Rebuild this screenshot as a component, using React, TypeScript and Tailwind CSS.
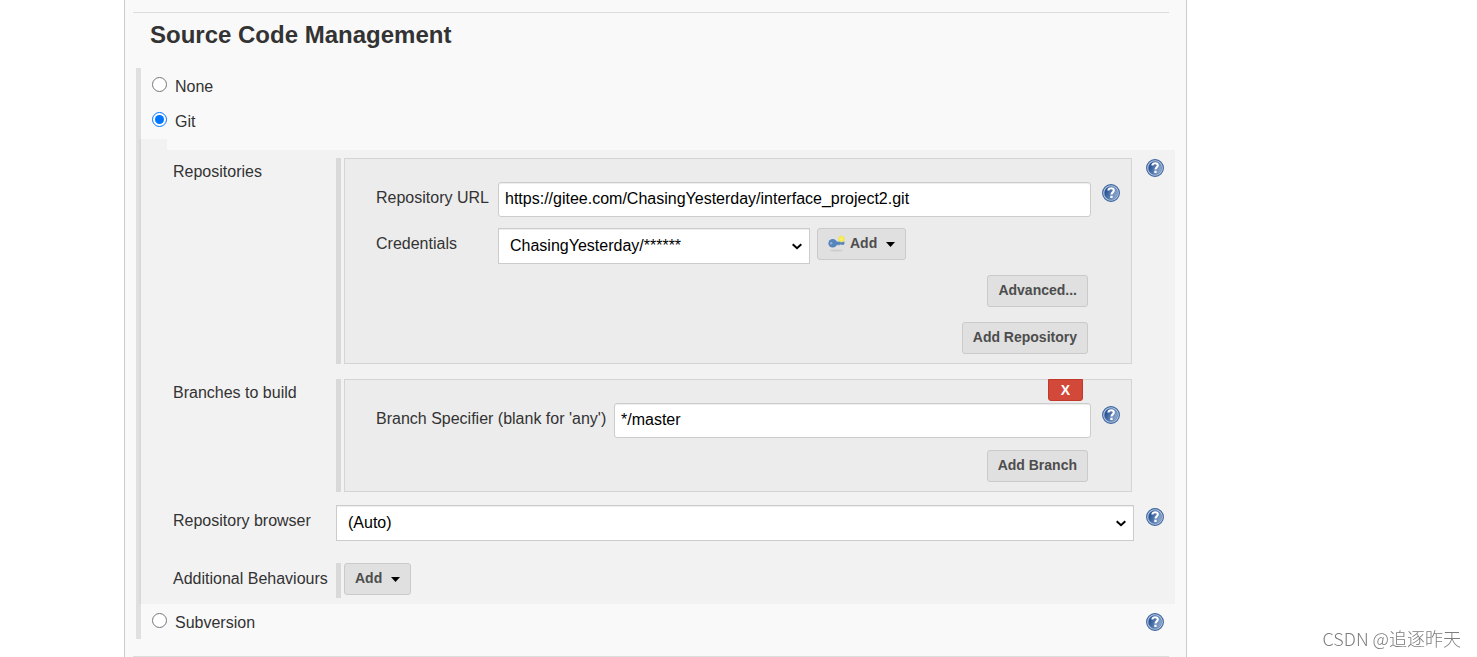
import { useState, type ReactNode } from 'react'

function HelpLink({ topic, className = '' }: { topic: string; className?: string }) {
  return (
    <a href="#help" aria-label={`Help for feature: ${topic}`} className={`block shrink-0 ${className}`}>
      <svg width="18" height="18" viewBox="0 0 18 18">
        <defs>
          <linearGradient id="help-fill" x1="0" y1="0.3" x2="1" y2="0.7">
            <stop offset="0.1" stopColor="#275293" />
            <stop offset="1" stopColor="#94afd3" />
          </linearGradient>
        </defs>
        <circle cx="9" cy="9" r="8.4" fill="#b9cae0" stroke="#3c64a0" strokeWidth="1.1" />
        <circle cx="9" cy="9" r="6.6" fill="url(#help-fill)" stroke="#5578aa" strokeWidth="0.5" />
        <path
          d="M6.400 6.500C6.400 5 7.600 4.300 9.100 4.300c1.600 0 2.700.9 2.700 2.200 0 1.900-2.300 1.800-2.300 4"
          fill="none"
          stroke="#fff"
          strokeWidth="2.100"
        />
        <rect x="8.300" y="11.700" width="2.300" height="2.300" fill="#fff" />
      </svg>
    </a>
  )
}

function Caret() {
  return (
    <svg width="9" height="5" viewBox="0 0 9 5" className="mt-[3px] ml-[9px]">
      <path d="M0 0h9L4.500 5z" fill="#000" />
    </svg>
  )
}

function KeyIcon() {
  return (
    <svg width="17" height="17" viewBox="0 0 17 17" className="mt-[2px] mr-[5px]">
      <defs>
        <radialGradient id="key-glow">
          <stop offset="0.2" stopColor="#f9f06a" />
          <stop offset="0.6" stopColor="#f1e64f" />
          <stop offset="1" stopColor="#f1e64f" stopOpacity="0" />
        </radialGradient>
      </defs>
      <ellipse cx="8.500" cy="15.500" rx="6.500" ry="1" fill="#b9b9b9" opacity="0.5" />
      <path d="M7 6.500h9.500v2.500l-1 1h-2l-1-.500-1 .800H7z" fill="#6b94c6" />
      <path d="M7 8h9" stroke="#41699f" strokeWidth="0.8" />
      <circle cx="4.700" cy="8.300" r="4.300" fill="#5583bb" />
      <circle cx="3.200" cy="8.200" r="1.200" fill="#8db0da" />
      <circle cx="13.500" cy="4" r="4" fill="url(#key-glow)" />
    </svg>
  )
}

function Button({ children }: { children: ReactNode }) {
  return (
    <button
      type="button"
      className="flex h-8 items-center rounded-[3px] border border-[#cacaca] bg-[#e0e0e0] px-[10px] pb-[3px] text-sm font-bold text-[#4d4d4d]"
    >
      {children}
    </button>
  )
}

function Select({ id, options }: { id: string; options: string[] }) {
  return (
    <div className="relative w-full">
      <select
        id={id}
        className="block h-9 w-full appearance-none border border-[#ccc] bg-white pr-8 pl-[11px] text-black shadow-[inset_0_1px_1px_rgba(0,0,0,0.075)]"
      >
        {options.map((option) => (
          <option key={option}>{option}</option>
        ))}
      </select>
      <svg
        width="10"
        height="7"
        viewBox="0 0 10 7"
        className="pointer-events-none absolute top-[15px] right-[8px]"
      >
        <path d="M.700 1.200L5 5.200l4.300-4" fill="none" stroke="#000" strokeWidth="2" />
      </svg>
    </div>
  )
}

function TextInput({ id, value }: { id: string; value: string }) {
  return (
    <input
      id={id}
      type="text"
      defaultValue={value}
      className="h-[35px] min-w-0 flex-1 rounded-[3px] border border-[#ccc] bg-white px-[6px] pb-px text-black shadow-[inset_0_1px_1px_rgba(0,0,0,0.075)]"
    />
  )
}

function ScmOption({
  name,
  selected,
  onSelect,
  help,
}: {
  name: string
  selected: string
  onSelect: (name: string) => void
  help?: boolean
}) {
  return (
    <div className="flex h-[35px] items-start justify-between pr-[11px] pl-[11px]">
      <label className="flex items-baseline gap-2 pt-[7px]">
        <input
          type="radio"
          name="scm"
          checked={selected === name}
          onChange={() => onSelect(name)}
          className="h-[15px] w-[15px]"
        />
        {name}
      </label>
      {help && <HelpLink topic={name} className="mt-[9px]" />}
    </div>
  )
}

const rowLabel = 'w-[163px] shrink-0'
const group = 'flex-1 border-l-[5px] border-[#d9d9d9] pl-[3px]'
const box = 'border border-[#d4d4d4] bg-[#ececec] pb-[9px] pl-[31px]'

export default function App() {
  const [scm, setScm] = useState('Git')

  return (
    <div className="min-h-screen bg-white font-['Liberation_Sans',Arial,sans-serif] text-base text-[#333]">
      <main className="mr-[290px] ml-[124px] min-h-screen border-x border-[#ccc] bg-[#f9f9f9] pt-3">
        <hr className="mr-[17px] ml-2 border-[#ddd]" />
        <h1 className="mt-[6px] ml-[25px] text-2xl leading-8 font-bold">Source Code Management</h1>

        <section className="mt-[17px] mr-[11px] ml-[11px] border-l-[5px] border-[#e0e0e0]">
          <ScmOption name="None" selected={scm} onSelect={setScm} />
          <ScmOption name="Git" selected={scm} onSelect={setScm} />

          <div className="mt-px -ml-[2px] flex">
            <div className="w-7 shrink-0 bg-black/[0.026]" />
            <div className="mt-[11px] min-w-0 flex-1 bg-black/[0.026] pt-2 pr-[11px] pb-[6px] pl-[6px]">
              {/* Repositories */}
              <div className="flex items-start">
                <div className={`${rowLabel} pt-[2px]`}>Repositories</div>
                <div className={group}>
                  <div className={`${box} pt-[23px]`}>
                    <div className="flex items-start pr-[11px]">
                      <label htmlFor="repo-url" className="w-[122px] shrink-0 pt-1">
                        Repository URL
                      </label>
                      <TextInput
                        id="repo-url"
                        value="https://gitee.com/ChasingYesterday/interface_project2.git"
                      />
                      <HelpLink topic="Repository URL" className="mt-[2px] ml-[11px]" />
                    </div>
                    <div className="mt-[11px] flex items-start">
                      <label htmlFor="credentials" className="w-[122px] shrink-0 pt-1">
                        Credentials
                      </label>
                      <div className="mr-[7px] w-[312px]">
                        <Select id="credentials" options={['ChasingYesterday/******', '- none -']} />
                      </div>
                      <Button>
                        <KeyIcon />
                        Add
                        <Caret />
                      </Button>
                    </div>
                    <div className="mt-[11px] mr-[43px] flex flex-col items-end gap-[15px]">
                      <Button>Advanced...</Button>
                      <Button>Add Repository</Button>
                    </div>
                  </div>
                </div>
                <HelpLink topic="Repositories" className="mt-[1px] ml-[14px]" />
              </div>

              {/* Branches */}
              <div className="mt-[15px] flex items-start">
                <div className={`${rowLabel} pt-[2px]`}>Branches to build</div>
                <div className={`${group} mr-8`}>
                  <div className={`${box} relative pt-[23px]`}>
                    <button
                      type="button"
                      aria-label="Delete"
                      className="absolute -top-px right-[48px] h-[22px] w-[35px] rounded-b-[3px] border border-[#c0392b] bg-[#d24939] text-sm leading-5 font-bold text-white"
                    >
                      X
                    </button>
                    <div className="flex items-start pr-[11px]">
                      <label htmlFor="branch" className="w-[238px] shrink-0 pt-1">
                        Branch Specifier (blank for 'any')
                      </label>
                      <TextInput id="branch" value="*/master" />
                      <HelpLink topic="Branch Specifier" className="mt-[3px] ml-[11px]" />
                    </div>
                    <div className="mt-3 mr-[43px] flex justify-end">
                      <Button>Add Branch</Button>
                    </div>
                  </div>
                </div>
              </div>

              {/* Browser */}
              <div className="mt-[13px] flex items-start">
                <label htmlFor="browser" className={`${rowLabel} pt-1`}>
                  Repository browser
                </label>
                <Select id="browser" options={['(Auto)', 'githubweb', 'gitlab']} />
                <HelpLink topic="Repository browser" className="mt-[3px] ml-3" />
              </div>

              {/* Behaviours */}
              <div className="mt-[22px] flex items-start">
                <div className={`${rowLabel} pt-1`}>Additional Behaviours</div>
                <div className={`${group} flex pb-[3px]`}>
                  <Button>
                    Add
                    <Caret />
                  </Button>
                </div>
              </div>
            </div>
          </div>

          <ScmOption name="Subversion" selected={scm} onSelect={setScm} help />
        </section>

        <hr className="mt-[17px] mr-[17px] ml-2 border-[#ddd]" />
      </main>

      <div className="fixed right-4 bottom-[5px] font-['Noto_Sans_CJK_SC',sans-serif] text-[18px] leading-7 font-light text-[#7d7d7d]">
        CSDN @追逐昨天
      </div>
    </div>
  )
}
